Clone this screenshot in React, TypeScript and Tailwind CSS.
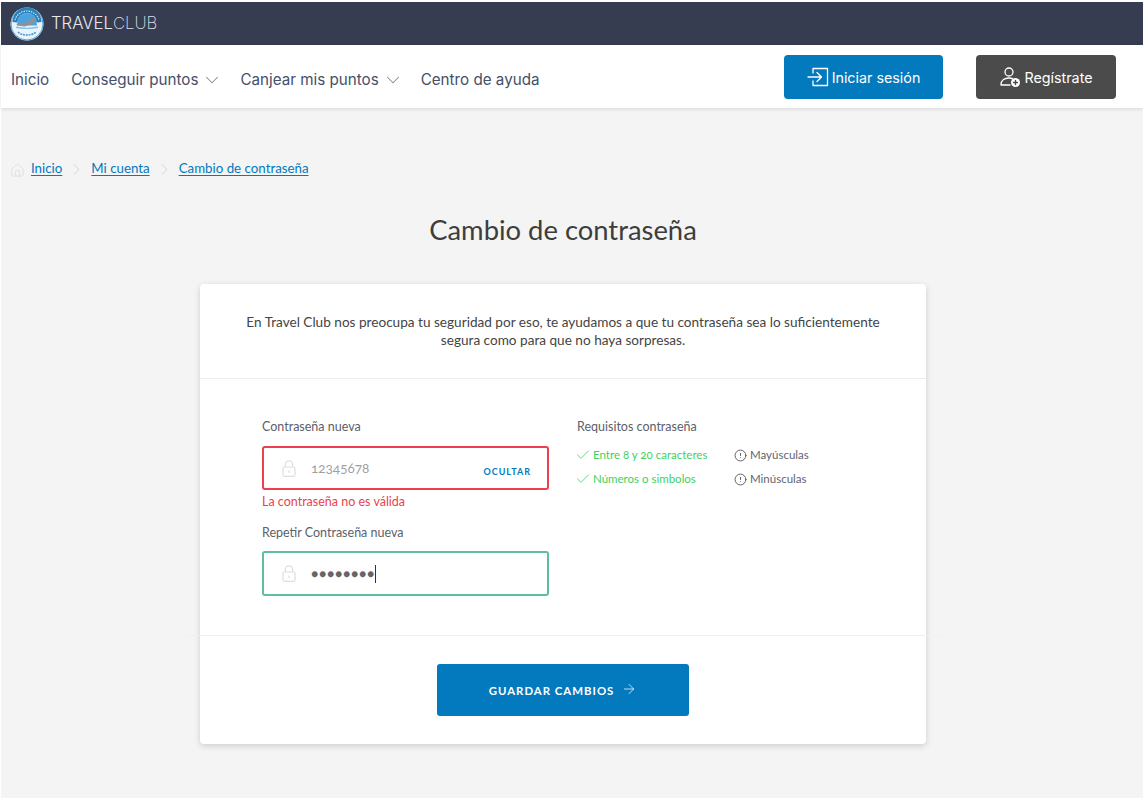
import { ChevronDown, ChevronRight, Check, ArrowRight, House, CircleAlert } from 'lucide-react'

function Logo() {
  return (
    <svg width="34" height="34" viewBox="0 0 34 34" className="shrink-0">
      <circle cx="17" cy="17" r="16.500" fill="#e9f3fa" />
      <circle cx="17" cy="17" r="16" fill="none" stroke="#4aa3dc" strokeWidth="1" />
      <path d="M2.500 15a14.500 14.500 0 0 1 29 0l-5 .5a9.500 9.500 0 0 0-19 0z" fill="#2a7fbd" />
      <path d="M5 13a12.500 12.500 0 0 1 24 0" fill="none" stroke="#cfe6f5" strokeWidth="1.200" strokeDasharray="1.500 1" />
      <path d="M7.500 15.500a9.500 9.500 0 0 1 19 0l.5 3H7z" fill="#4aa3dc" />
      <path d="M6 17l9-1.500 8-4.500 3 .5-3.500 5.500-8 2.500-6.500-1z" fill="#8b929c" />
      <path d="M6 19.500c7 1.500 15 1.500 22 0v1.500c-7 1.300-15 1.300-22 0z" fill="#7fbfe8" />
      <path d="M8 25c4 4 14 4 18 0" fill="none" stroke="#3f97d3" strokeWidth="1.500" strokeDasharray="2 .8" />
    </svg>
  )
}

function UserPlusIcon() {
  return (
    <svg width="22" height="22" viewBox="0 0 22 22" fill="none" stroke="#fff" strokeWidth="1.3" strokeLinecap="round">
      <circle cx="10" cy="6" r="4" />
      <path d="M2 19c0-5 4-7 8-7 1.500 0 2.500.2 3.500.6M2 19h9" />
      <circle cx="16.500" cy="16.500" r="4.500" fill="#fff" stroke="none" />
      <path d="M16.500 14.500v4M14.500 16.500h4" stroke="#4b4b4b" strokeWidth="1.400" />
    </svg>
  )
}

function LoginIcon() {
  return (
    <svg width="22" height="20" viewBox="0 0 22 20" fill="none" stroke="#fff" strokeWidth="1.3" strokeLinecap="round" strokeLinejoin="round">
      <path d="M6 6V1.500h14.500v17H6V14" />
      <path d="M1 10h13M10 5.500l4.500 4.500-4.500 4.500" />
    </svg>
  )
}

function LockIcon() {
  return (
    <svg width="14" height="17" viewBox="0 0 14 17" fill="none" stroke="#dedede" strokeWidth="1.200" className="shrink-0">
      <rect x="1" y="7" width="12" height="9.300" rx="1.500" />
      <path d="M3.300 7V4.500a3.700 3.700 0 0 1 7.400 0V7" />
      <path d="M7 10.500v2.500" />
    </svg>
  )
}

function NavItem({ label, arrow }: { label: string; arrow?: boolean }) {
  return (
    <a className="flex items-center gap-[3px] text-[15.200px] text-[#44506a]">
      {label}
      {arrow && <ChevronDown className="w-[22px] h-[22px] -mr-[5px] text-[#7f889b]" strokeWidth={1.100} />}
    </a>
  )
}

function PasswordField({ className, children }: { className: string; children: React.ReactNode }) {
  return (
    <div className={`flex items-center rounded-[3px] border-2 bg-white pl-[18px] pr-[16px] ${className}`}>
      <LockIcon />
      {children}
    </div>
  )
}

function Requirement({ label, ok }: { label: string; ok?: boolean }) {
  return (
    <div className={`flex items-center text-[11.500px] leading-[24px] ${ok ? 'text-[#3ed160]' : 'text-[#5f6470]'}`}>
      {ok ? (
        <Check className="w-[16px] h-[16px] -ml-[2px] mr-[2px] text-[#3ed160]" strokeWidth={1.200} />
      ) : (
        <CircleAlert className="w-[13px] h-[13px] mr-[3px] text-[#555]" strokeWidth={1.700} />
      )}
      {label}
    </div>
  )
}

export default function App() {
  return (
    <div className="min-h-[800px] bg-white pt-[2px] pl-[1px] font-['Lato','Open_Sans',sans-serif] oldstyle-nums">
      <div className="h-[796px] bg-[#f4f4f4]">
        {/* Top bar */}
        <div className="h-[43px] bg-[#373d51] flex items-center pl-[9px] gap-[7px]">
          <Logo />
          <div className="text-[16.700px] text-[#e8e9ec] font-['Inter',sans-serif] font-light">
            TRAVEL<span className="text-[#dcdee4] font-extralight">CLUB</span>
          </div>
        </div>

        {/* Nav */}
        <div className="h-[63px] bg-white shadow-[0_1px_4px_rgba(0,0,0,0.12)] flex items-center pl-[10px] pr-[27px] font-['Inter',sans-serif]">
          <div className="flex items-center gap-[22px] mt-[8px]">
            <NavItem label="Inicio" />
            <NavItem label="Conseguir puntos" arrow />
            <NavItem label="Canjear mis puntos" arrow />
            <NavItem label="Centro de ayuda" />
          </div>
          <button className="ml-auto flex items-center justify-center gap-[3px] w-[159px] h-[44px] rounded-[4px] bg-[#0379be] text-white text-[14.300px]">
            <LoginIcon />
            <span className="pt-[2px]">Iniciar sesión</span>
          </button>
          <button className="ml-[33px] flex items-center justify-center gap-[3px] w-[140px] h-[44px] rounded-[4px] bg-[#4b4b4b] text-white text-[14.300px]">
            <UserPlusIcon />
            <span className="pt-[2px]">Regístrate</span>
          </button>
        </div>

        {/* Page body */}
        <div className="w-[1124px] pt-[52px]">
          <div className="flex items-center h-[18px] pl-[9px] text-[13.300px] text-[#0379be]">
            <House className="w-[15px] h-[15px] text-[#d9d9d9] mr-[6px] mt-[2px]" strokeWidth={1.100} />
            <a className="underline underline-offset-2">Inicio</a>
            <ChevronRight className="w-[19px] h-[19px] text-[#cfcfcf] mx-[5px]" strokeWidth={1.100} />
            <a className="underline underline-offset-2">Mi cuenta</a>
            <ChevronRight className="w-[19px] h-[19px] text-[#cfcfcf] mx-[5px]" strokeWidth={1.100} />
            <a className="underline underline-offset-2">Cambio de contraseña</a>
          </div>

          <h1 className="mt-[34px] text-center text-[27.400px] leading-[36px] text-[#3d3d3d]">Cambio de contraseña</h1>

          <div className="mt-[36px] mx-auto w-[726px] h-[460px] bg-white rounded-[4px] shadow-[0_2px_6px_rgba(0,0,0,0.16)]">
            <div className="h-[95px] border-b border-[#ececec] pt-[29px] px-[40px] text-center text-[13.600px] leading-[18px] text-[#444]">
              En Travel Club nos preocupa tu seguridad por eso, te ayudamos a que tu contraseña sea lo suficientemente
              <br />
              segura como para que no haya sorpresas.
            </div>

            <div className="h-[256px] flex pl-[62px] pt-[40px] text-[#5c606b]">
              <div className="w-[287px]">
                <label className="block text-[12.500px] leading-[16px] mb-[11px]">Contraseña nueva</label>
                <PasswordField className="h-[44px] border-[#ec3f4f]">
                  <span className="ml-[15px] text-[13.500px] text-[#a0a0a0]">12345678</span>
                  <span className="ml-auto mt-[8px] text-[9px] font-bold tracking-[1px] text-[#0379be]">OCULTAR</span>
                </PasswordField>
                <p className="mt-[4px] text-[12.500px] leading-[16px] text-[#ec3f4f]">La contraseña no es válida</p>
                <label className="block mt-[15px] text-[12.500px] leading-[16px] mb-[10px]">Repetir Contraseña nueva</label>
                <PasswordField className="h-[45px] border-[#5dbf9b]">
                  <span className="ml-[15px] text-[12px] tracking-[0.8px] text-[#666] border-r border-[#333] leading-[18px]">●●●●●●●●</span>
                </PasswordField>
              </div>
              <div className="ml-[28px]">
                <div className="text-[12.500px] leading-[16px] mb-[8px]">Requisitos contraseña</div>
                <div className="flex">
                  <div className="w-[157px]">
                    <Requirement label="Entre 8 y 20 caracteres" ok />
                    <Requirement label="Números o simbolos" ok />
                  </div>
                  <div>
                    <Requirement label="Mayúsculas" />
                    <Requirement label="Minúsculas" />
                  </div>
                </div>
              </div>
            </div>

            <div className="-mx-[15px] border-t border-[#f0f0f0]" />
            <div className="flex justify-center pt-[28px]">
              <button className="flex items-center justify-center gap-[7px] w-[252px] h-[52px] pt-[2px] rounded-[3px] bg-[#0379be] text-white text-[11.400px] font-bold tracking-[1px]">
                GUARDAR CAMBIOS
                <ArrowRight className="w-[16px] h-[16px] -mt-[4px]" strokeWidth={1.100} />
              </button>
            </div>
          </div>
        </div>
      </div>
    </div>
  )
}
